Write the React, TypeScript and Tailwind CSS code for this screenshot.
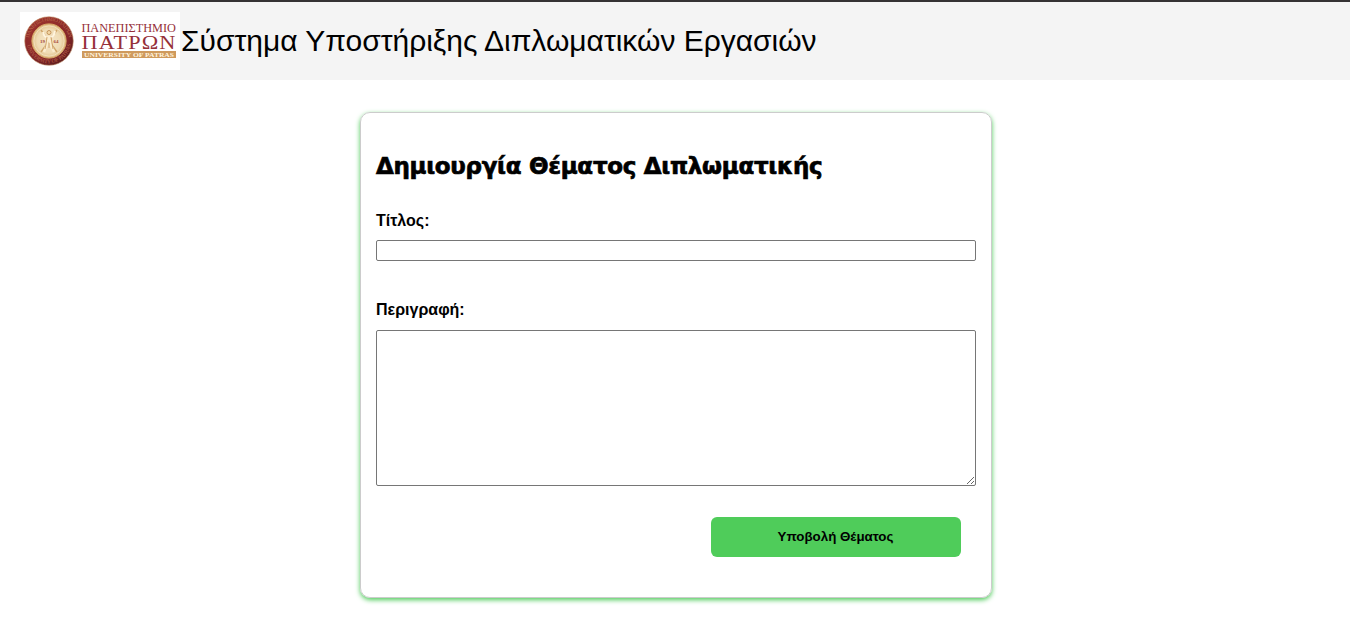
function UniversityLogo() {
  return (
    <svg width="160" height="58" viewBox="0 0 160 58" className="block shrink-0" role="img">
      <defs>
        <path id="ringTop" d="M8.8 29a20.2 20.2 0 0 1 40.4 0" />
        <path id="ringBottom" d="M6.8 29a22.2 22.2 0 0 0 44.4 0" />
        <radialGradient id="ring" gradientUnits="userSpaceOnUse" cx="22" cy="20" r="36">
          <stop offset="0.35" stopColor="#96302c" />
          <stop offset="0.75" stopColor="#852528" />
          <stop offset="1" stopColor="#5c1c1d" />
        </radialGradient>
        <radialGradient id="disc">
          <stop offset="0" stopColor="#f6e6c8" />
          <stop offset="0.7" stopColor="#efdbb4" />
          <stop offset="1" stopColor="#deba80" />
        </radialGradient>
      </defs>
      <rect width="160" height="58" fill="#fff" />
      <circle cx="29" cy="29" r="24.3" fill="url(#ring)" stroke="#c79872" strokeWidth="0.6" />
      <circle cx="29" cy="29" r="17.1" fill="url(#disc)" stroke="#d8aa68" strokeWidth="1" />
      <circle cx="29" cy="29" r="15.1" fill="none" stroke="#f7e9cd" strokeWidth="0.7" />
      <g fill="#b9674a" fontFamily="'Liberation Serif', serif" fontSize="5.6">
        <text textLength="57" lengthAdjust="spacing"><textPath href="#ringTop" startOffset="3">ΠΑΝΕΠΙΣΤΗΜΙΟ ΠΑΤΡΩΝ</textPath></text>
        <text textLength="62" lengthAdjust="spacing"><textPath href="#ringBottom" startOffset="4">UNIVERSITY OF PATRAS</textPath></text>
      </g>
      <g fill="none" stroke="#d0a56a" strokeWidth="1.4">
        <path d="M21 18 37 40M37 18 21 40" />
        <path d="M23 20c1 5 3 6 6 6s5-2 6-7" stroke="#fff5df" strokeWidth="2" />
        <path d="m29 24-2 8-3 8M29 25l2 8 3 7" stroke="#fbedcf" strokeWidth="2.4" />
        <path d="m27 25-1 7-1 5M31 25l1 6 1 6M29 31v5" stroke="#c79455" strokeWidth="0.8" />
      </g>
      <circle cx="29" cy="20.5" r="2" fill="#f2d6a4" stroke="#c08c50" strokeWidth="0.9" />
      <g fill="#a84c38" fontFamily="'Liberation Serif', serif" fontSize="5" fontWeight="700">
        <text x="20" y="31">19</text>
        <text x="33.5" y="31">64</text>
      </g>
      <g fill="#963039" fontFamily="'Liberation Serif', serif">
        <text x="61.5" y="20" fontSize="11.6" textLength="94.5" lengthAdjust="spacingAndGlyphs">ΠΑΝΕΠΙΣΤΗΜΙΟ</text>
        <text x="61.5" y="36.5" fontSize="19.8" textLength="95" lengthAdjust="spacingAndGlyphs" letterSpacing="1">ΠΑΤΡΩΝ</text>
      </g>
      <rect x="62" y="39" width="94" height="7" fill="#cf9a5d" />
      <text x="64" y="44.8" fill="#fff4df" fontFamily="'Liberation Serif', serif" fontWeight="700" fontSize="6.8" textLength="90" lengthAdjust="spacingAndGlyphs">UNIVERSITY OF PATRAS</text>
    </svg>
  );
}

export default function App() {
  return (
    <div className="h-[635px] overflow-hidden bg-white font-['Liberation_Sans',Arial,sans-serif] text-black">
      <header className="flex h-20 items-center border-t-2 border-[#353233] bg-[#f4f4f4] pl-5">
        <UniversityLogo />
        <h1 className="ml-px text-[30px] leading-9 tracking-[-0.02px] whitespace-nowrap">Σύστημα Υποστήριξης Διπλωματικών Εργασιών</h1>
      </header>
      <main className="ml-[360px] mt-8 flex h-[486px] w-[632px] flex-col rounded-[10px] border border-[#ccc] px-[15px] shadow-[0_2px_5px_#4ecb5a]">
        <h2 className="mt-[35px] h-9 whitespace-nowrap font-['DejaVu_Sans',sans-serif] text-[23px] leading-9 font-bold tracking-[-0.3px] [-webkit-text-stroke:0.7px_black]">Δημιουργία Θέματος Διπλωματικής</h2>
        <form className="flex flex-col" onSubmit={(e) => e.preventDefault()}>
          <label htmlFor="title" className="mt-[27px] h-5 text-base leading-5 font-bold">Τίτλος:</label>
          <input id="title" className="mt-[9px] h-[21px] w-[600px] rounded-[2px] border border-[#767676] px-1 text-sm outline-none" />
          <label htmlFor="description" className="mt-[39px] h-5 text-base leading-5 font-bold">Περιγραφή:</label>
          <textarea id="description" className="mt-[10px] h-[156px] w-[600px] resize rounded-[2px] border border-[#767676] p-1 text-sm outline-none" />
          <button className="mt-[31px] mr-[15px] h-10 w-[250px] self-end rounded-[6px] bg-[#4fcc5a] pr-px text-[13.333px] font-bold">Υποβολή Θέματος</button>
        </form>
      </main>
    </div>
  );
}
